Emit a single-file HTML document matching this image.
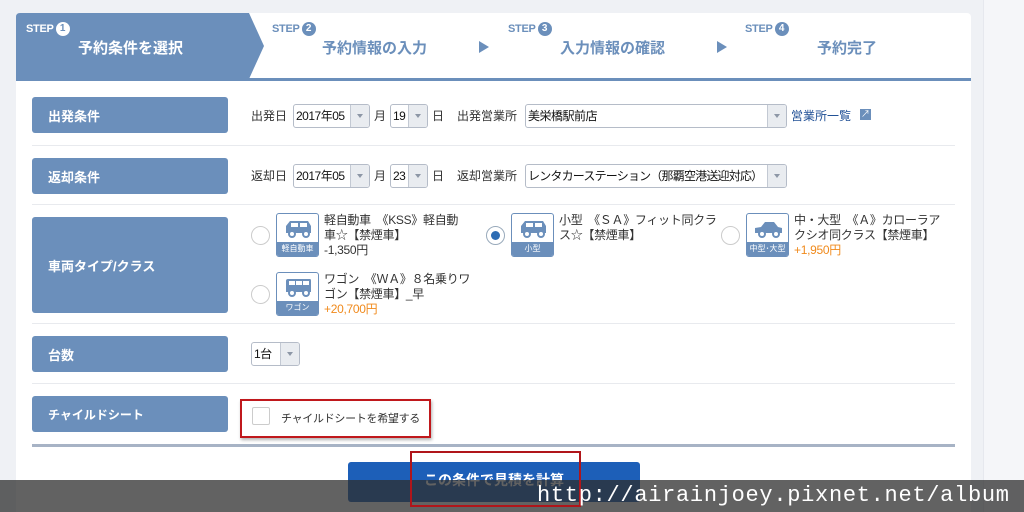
<!DOCTYPE html>
<html><head><meta charset="utf-8"><style>
*{margin:0;padding:0;box-sizing:border-box}
html,body{width:1024px;height:512px;overflow:hidden}
body{background:#eff1f5;font-family:"Liberation Sans","Noto Sans CJK JP",sans-serif;position:relative;color:#333}
.a{position:absolute}
.card{left:16px;top:13px;width:955px;height:499px;background:#fff;border-radius:4px 4px 0 0}
.strip{left:983px;top:0;width:41px;height:512px;background:#f5f6f9;border-left:1px solid #e6e8ee}
.lbl{left:32px;width:196px;background:#6b8fbb;border-radius:3px;color:#fff;font-size:13px;font-weight:bold;padding-left:16px;display:flex;align-items:center}
.hl{left:32px;width:923px;height:1px;background:#e8eaee}
.t{font-size:12px;color:#333;white-space:nowrap}
.sel{height:24px;border:1px solid #b5bcc8;border-radius:3px;background:#fff;font-size:12px;padding-left:2px;line-height:22px;color:#111;white-space:nowrap;overflow:hidden;letter-spacing:-.5px}
.sel i{position:absolute;right:0;top:0;width:19px;height:22px;background:#e9ecf0;border-left:1px solid #c3c9d3}
.sel i:after{content:"";position:absolute;left:6px;top:9px;border:3.5px solid transparent;border-top:4px solid #8d97a6}
.step{font-size:11px;font-weight:bold;color:#6b8fbb;letter-spacing:-.3px}
.num{display:inline-block;width:14px;height:14px;border-radius:50%;background:#6b8fbb;color:#fff;font-size:10px;text-align:center;line-height:14px;margin-left:2px;vertical-align:1px}
.st{font-size:15px;font-weight:bold;color:#6b8fbb}
.tri{width:0;height:0;border-left:10px solid #6b8fbb;border-top:6px solid transparent;border-bottom:6px solid transparent}
.radio{width:19px;height:19px;border-radius:50%;border:1px solid #ccc;background:#fff}
.car{width:43px;height:44px;border:1px solid #6b8fbb;border-radius:3px;background:#fff;overflow:hidden}
.car b{position:absolute;left:0;bottom:0;width:100%;height:14px;background:#6b8fbb;color:#fff;font-size:8px;text-align:center;line-height:14px;font-weight:normal}
.car svg{position:absolute;left:7px;top:5px}
.ct{font-size:12px;line-height:15px;color:#333;letter-spacing:-.3px}
.or{color:#f08a1c}
</style></head><body>
<div class="a card"></div>
<div class="a strip"></div>
<svg class="a" style="left:16px;top:13px" width="250" height="66"><path d="M0 4 Q0 0 4 0 H233 L248 33 L233 66 H0Z" fill="#6b8fbb"/></svg>
<div class="a step" style="left:26px;top:22px;color:#fff">STEP<span class="num" style="background:#fff;color:#6b8fbb">1</span></div>
<div class="a st" style="left:78px;top:37px;color:#fff">予約条件を選択</div>
<div class="a step" style="left:272px;top:22px">STEP<span class="num">2</span></div>
<div class="a st" style="left:322px;top:37px">予約情報の入力</div>
<div class="a tri" style="left:479px;top:41px"></div>
<div class="a step" style="left:508px;top:22px">STEP<span class="num">3</span></div>
<div class="a st" style="left:560px;top:37px">入力情報の確認</div>
<div class="a tri" style="left:717px;top:41px"></div>
<div class="a step" style="left:745px;top:22px">STEP<span class="num">4</span></div>
<div class="a st" style="left:817px;top:37px">予約完了</div>
<div class="a" style="left:16px;top:78px;width:955px;height:3px;background:#6b8fbb"></div>
<!-- row1 -->
<div class="a lbl" style="top:97px;height:36px">出発条件</div>
<div class="a t" style="left:251px;top:107px">出発日</div>
<div class="a sel" style="left:293px;top:104px;width:77px">2017年05<i></i></div>
<div class="a t" style="left:374px;top:107px">月</div>
<div class="a sel" style="left:390px;top:104px;width:38px">19<i></i></div>
<div class="a t" style="left:432px;top:107px">日</div>
<div class="a t" style="left:457px;top:107px">出発営業所</div>
<div class="a sel" style="left:525px;top:104px;width:262px">美栄橋駅前店<i></i></div>
<div class="a t" style="left:791px;top:107px;color:#1f4f95">営業所一覧</div>
<div class="a" style="left:860px;top:109px;width:11px;height:11px;background:#6b8fbb;color:#fff;font-size:9px;line-height:11px;text-align:center">↗</div>
<div class="a hl" style="top:145px"></div>
<!-- row2 -->
<div class="a lbl" style="top:158px;height:36px">返却条件</div>
<div class="a t" style="left:251px;top:167px">返却日</div>
<div class="a sel" style="left:293px;top:164px;width:77px">2017年05<i></i></div>
<div class="a t" style="left:374px;top:167px">月</div>
<div class="a sel" style="left:390px;top:164px;width:38px">23<i></i></div>
<div class="a t" style="left:432px;top:167px">日</div>
<div class="a t" style="left:457px;top:167px">返却営業所</div>
<div class="a sel" style="left:525px;top:164px;width:262px;letter-spacing:-.8px">レンタカーステーション（那覇空港送迎対応）<i></i></div>
<div class="a hl" style="top:204px"></div>
<!-- row3 -->
<div class="a lbl" style="top:217px;height:96px">車両タイプ/クラス</div>
<div class="a radio" style="left:251px;top:226px"></div>
<div class="a car" style="left:276px;top:213px"><svg width="29" height="20" viewBox="0 0 29 20"><path d="M2 14V7L6 2H24L27 7V14Z" fill="#6b8fbb"/><rect x="7" y="4" width="7" height="4" fill="#fff"/><rect x="16" y="4" width="7" height="4" fill="#fff"/><circle cx="8" cy="15" r="3" fill="#fff" stroke="#6b8fbb" stroke-width="2"/><circle cx="22" cy="15" r="3" fill="#fff" stroke="#6b8fbb" stroke-width="2"/></svg><b>軽自動車</b></div>
<div class="a ct" style="left:324px;top:213px">軽自動車　《KSS》軽自動<br>車☆【禁煙車】<br>-1,350円</div>
<div class="a radio" style="left:486px;top:226px;border-color:#9ab"></div>
<div class="a" style="left:491px;top:231px;width:9px;height:9px;border-radius:50%;background:#2e6db4"></div>
<div class="a car" style="left:511px;top:213px"><svg width="29" height="20" viewBox="0 0 29 20"><path d="M2 14V7L6 2H24L27 7V14Z" fill="#6b8fbb"/><rect x="7" y="4" width="7" height="4" fill="#fff"/><rect x="16" y="4" width="7" height="4" fill="#fff"/><circle cx="8" cy="15" r="3" fill="#fff" stroke="#6b8fbb" stroke-width="2"/><circle cx="22" cy="15" r="3" fill="#fff" stroke="#6b8fbb" stroke-width="2"/></svg><b>小型</b></div>
<div class="a ct" style="left:559px;top:213px">小型　《ＳＡ》フィット同クラ<br>ス☆【禁煙車】</div>
<div class="a radio" style="left:721px;top:226px"></div>
<div class="a car" style="left:746px;top:213px"><svg width="29" height="20" viewBox="0 0 29 20"><path d="M1 14V9L7 8L11 3H20L24 8L28 9V14Z" fill="#6b8fbb"/><circle cx="8" cy="15" r="3" fill="#fff" stroke="#6b8fbb" stroke-width="2"/><circle cx="22" cy="15" r="3" fill="#fff" stroke="#6b8fbb" stroke-width="2"/></svg><b>中型･大型</b></div>
<div class="a ct" style="left:794px;top:213px">中・大型　《Ａ》カローラア<br>クシオ同クラス【禁煙車】<br><span class="or">+1,950円</span></div>
<div class="a radio" style="left:251px;top:285px"></div>
<div class="a car" style="left:276px;top:272px"><svg width="29" height="20" viewBox="0 0 29 20"><path d="M2 14V3Q2 1 4 1H26Q27 1 27 3V14Z" fill="#6b8fbb"/><rect x="5" y="3" width="6" height="4" fill="#fff"/><rect x="12" y="3" width="6" height="4" fill="#fff"/><rect x="19" y="3" width="6" height="4" fill="#fff"/><circle cx="8" cy="15" r="3" fill="#fff" stroke="#6b8fbb" stroke-width="2"/><circle cx="22" cy="15" r="3" fill="#fff" stroke="#6b8fbb" stroke-width="2"/></svg><b>ワゴン</b></div>
<div class="a ct" style="left:324px;top:272px">ワゴン　《ＷＡ》８名乗りワ<br>ゴン【禁煙車】_早<br><span class="or">+20,700円</span></div>
<div class="a hl" style="top:323px"></div>
<!-- row4 -->
<div class="a lbl" style="top:336px;height:36px">台数</div>
<div class="a sel" style="left:251px;top:342px;width:49px">1台<i></i></div>
<div class="a hl" style="top:383px"></div>
<!-- row5 -->
<div class="a lbl" style="top:396px;height:36px;font-size:12px">チャイルドシート</div>
<div class="a" style="left:240px;top:399px;width:191px;height:39px;border:2px solid #c0181c;box-shadow:1px 2px 3px rgba(0,0,0,.3)"></div>
<div class="a" style="left:252px;top:407px;width:18px;height:18px;border:1px solid #ccc;border-radius:2px;background:#fff"></div>
<div class="a t" style="left:281px;top:410px;font-size:11px;letter-spacing:-.3px">チャイルドシートを希望する</div>
<div class="a" style="left:32px;top:444px;width:923px;height:3px;background:#a7b3c5"></div>
<div class="a" style="left:348px;top:462px;width:292px;height:40px;background:#1d5fb8;border-radius:3px;color:#fff;font-size:14px;font-weight:bold;text-align:center;line-height:36px">この条件で見積を計算</div>
<div class="a" style="left:0;top:480px;width:1024px;height:32px;background:rgba(45,45,45,.75)"></div>
<div class="a" style="left:410px;top:451px;width:171px;height:56px;border:2px solid #b0151a"></div>
<div class="a" style="left:537px;top:483px;font-family:'Liberation Mono',monospace;font-size:22px;color:#fff;letter-spacing:.7px;white-space:nowrap">http://airainjoey.pixnet.net/album</div>
</body></html>
